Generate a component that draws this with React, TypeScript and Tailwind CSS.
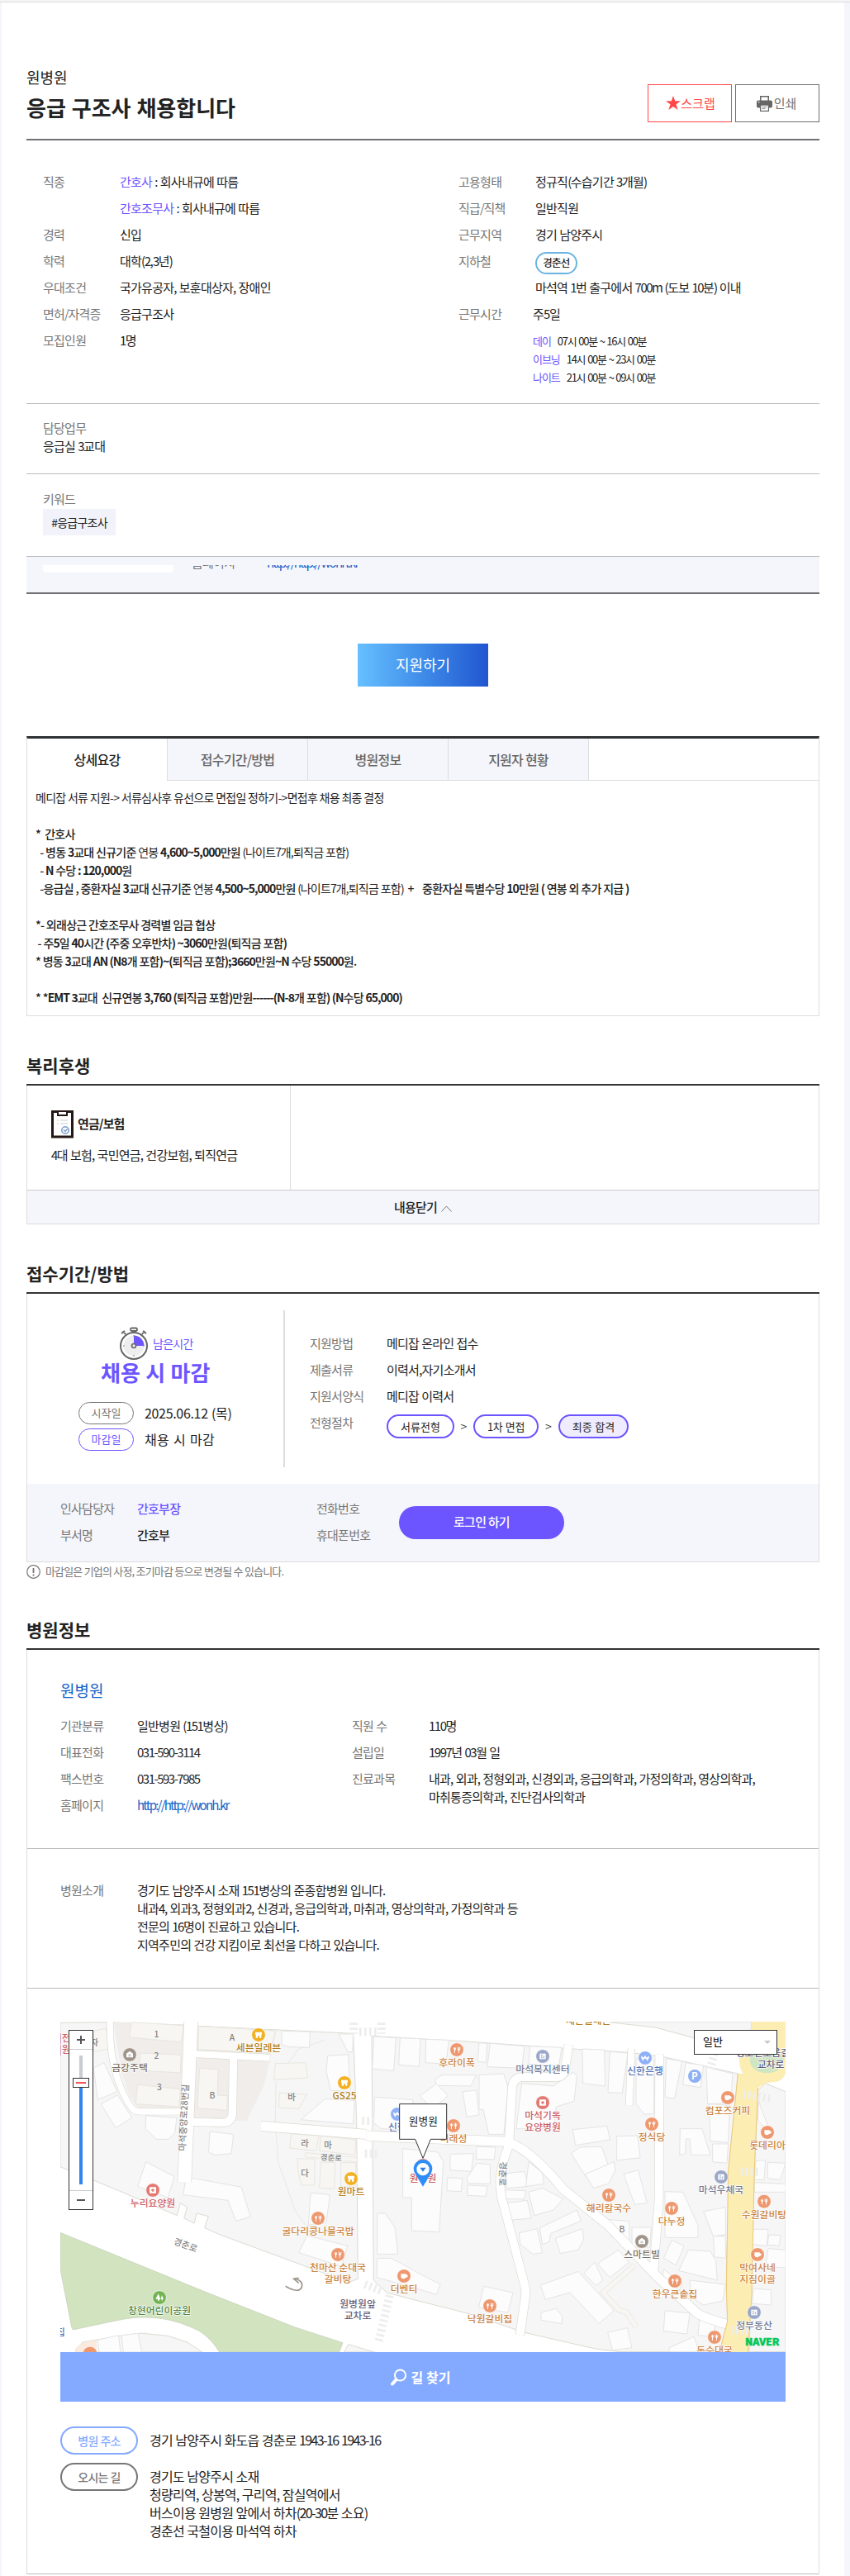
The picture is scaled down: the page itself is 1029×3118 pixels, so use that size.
import { useState, type ReactNode } from "react";

/* ================= TEXT ================= */
// Digits and latin runs sit tighter than the hangul around them
function T({ children }: { children: string }) {
  return (
    <>
      {children.split(/([0-9A-Za-z.:/~()+-]+)/).map((part, i) =>
        i % 2 === 1 ? (
          <span key={i} className="tracking-[-0.1em]">
            {part}
          </span>
        ) : (
          part
        )
      )}
    </>
  );
}

type RowProps = {
  label?: string;
  labelClass?: string;
  children: ReactNode;
};

function Row({ label = "", labelClass = "w-[93px]", children }: RowProps) {
  return (
    <div className="flex leading-8">
      <span className={`shrink-0 text-[#777] ${labelClass}`}>
        <T>{label}</T>
      </span>
      <div className="text-[#222]">{children}</div>
    </div>
  );
}

function SectionTitle({ children }: { children: string }) {
  return (
    <h2 className="border-b-2 border-[#333] pb-2 text-[21px] font-bold leading-[30px] tracking-normal text-[#222]">
      {children}
    </h2>
  );
}

/* ================= ICONS ================= */
function PrinterIcon() {
  return (
    <svg width="19" height="19" viewBox="0 0 19 19">
      <path d="M4 0h11v6H4z" fill="#666" />
      <path d="M5.5 1.5h8V6h-8z" fill="#fff" />
      <rect x="0" y="5.5" width="19" height="9" rx="2" fill="#666" />
      <path d="M4 10.500h11V19H4z" fill="#666" />
      <path d="M5.200 11.700h8.600v6.100H5.200z" fill="#fff" />
      <path d="M6.500 13.500h6M6.500 15.500h4" stroke="#888" />
      <circle cx="2.800" cy="7.800" r=".8" fill="#fff" />
    </svg>
  );
}

function InsuranceIcon() {
  return (
    <svg width="27" height="34" viewBox="0 0 27 34">
      <rect x="1.500" y="1.500" width="24" height="30.500" fill="#fff" stroke="#231815" strokeWidth="3" />
      <path d="M8 2v4h11V2" fill="#fff" stroke="#231815" strokeWidth="2" />
      <path d="M7 12h2M11 12h9M7 16h2M11 16h9" stroke="#ddd" strokeWidth="1.600" />
      <circle cx="17" cy="24" r="4.200" fill="#fff" stroke="#8aa8d0" strokeWidth="1.800" />
      <path d="M15 23.500l2 2 2.500-3" fill="none" stroke="#7f9fcc" strokeWidth="1.500" />
    </svg>
  );
}

function StopwatchIcon() {
  return (
    <svg width="36" height="40" viewBox="0 0 36 40">
      <rect x="14" y="1.500" width="8" height="3.500" rx="1.500" fill="none" stroke="#666" strokeWidth="1.800" />
      <path d="M18 5v3M5 5l3 4M31 5l-3 4M3 8l4-3M33 8l-4-3" stroke="#666" strokeWidth="2" />
      <circle cx="18" cy="23" r="16" fill="#fff" stroke="#666" strokeWidth="2" />
      <circle cx="18" cy="23" r="12.500" fill="#eee" />
      <path d="M18 23V10.500A12.500 12.500 0 0 1 30.500 23z" fill="#6c55ff" />
      <path d="M18 34v2M5 23h2M29 23h2M18 10v2" stroke="#888" />
      <circle cx="18" cy="23" r="2.500" fill="#eee" stroke="#666" strokeWidth="1.600" />
    </svg>
  );
}

/* ================= MAP ================= */
type Poi = {
  x: number;
  y: number;
  kind: "food" | "cup" | "store" | "cross" | "home" | "bank" | "office" | "park";
  name: string[];
};

const POI_COLORS: Record<Poi["kind"], [string, string]> = {
  food: ["#ee9870", "#cc8442"],
  cup: ["#ee9870", "#cc8442"],
  store: ["#f2b122", "#b27f1c"],
  cross: ["#e27a73", "#cc6067"],
  home: ["#9f958a", "#7d7368"],
  bank: ["#8fb0f5", "#5272b5"],
  office: ["#9ba7c8", "#727a94"],
  park: ["#71b552", "#4e853f"],
};

const POIS: Poi[] = [
  { x: 291, y: 171, kind: "home", name: ["금강주택"] },
  { x: 759, y: 99, kind: "store", name: ["세븐일레븐"] },
  { x: 1071, y: 273, kind: "store", name: ["GS25"] },
  { x: 1095, y: 621, kind: "store", name: ["원마트"] },
  { x: 375, y: 663, kind: "cross", name: ["누리요양원"] },
  { x: 975, y: 765, kind: "food", name: ["굴다리콩나물국밥"] },
  { x: 1047, y: 897, kind: "food", name: ["천마산 순대국", "갈비탕"] },
  { x: 1287, y: 975, kind: "cup", name: ["더벤티"] },
  { x: 399, y: 1053, kind: "park", name: ["창현어린이공원"] },
  { x: 1263, y: 387, kind: "bank", name: ["신협"] },
  { x: 1356, y: 573, kind: "cross", name: ["원병원"] },
  { x: 1479, y: 153, kind: "food", name: ["후라이폭"] },
  { x: 1791, y: 177, kind: "office", name: ["마석복지센터"] },
  { x: 2163, y: 183, kind: "bank", name: ["신한은행"] },
  { x: 1791, y: 345, kind: "cross", name: ["마석기독", "요양병원"] },
  { x: 1467, y: 429, kind: "food", name: ["미래성"] },
  { x: 2187, y: 423, kind: "food", name: ["정식당"] },
  { x: 2463, y: 327, kind: "cup", name: ["컴포즈커피"] },
  { x: 2607, y: 453, kind: "cup", name: ["롯데리아"] },
  { x: 2439, y: 615, kind: "office", name: ["마석우체국"] },
  { x: 2595, y: 704, kind: "food", name: ["수원갈비탕"] },
  { x: 2031, y: 681, kind: "food", name: ["해리칼국수"] },
  { x: 2259, y: 729, kind: "food", name: ["다누정"] },
  { x: 2151, y: 849, kind: "home", name: ["스마트빌"] },
  { x: 2271, y: 993, kind: "food", name: ["한우큰솥집"] },
  { x: 2571, y: 897, kind: "cup", name: ["박여사네", "지짐이골"] },
  { x: 2559, y: 1107, kind: "office", name: ["정부동산"] },
  { x: 1599, y: 1083, kind: "food", name: ["낙원갈비집"] },
  { x: 2415, y: 1197, kind: "food", name: ["돈수대국"] },
];

const LAND = [
  "39,55 208,53 487,63 540,67 1103,94 1115,410 1120,985 1085,998 945,945 620,825 563,800 577,758 535,747 525,783 488,765 500,725 475,710 463,755 240,660 39,578",
  "1170,103 1320,112 1500,122 1870,148 2105,163 2235,180 2500,240 2470,580 2458,960 2462,1140 2433,1250 2070,1250 1978,1238 1725,1180 1517,1110 1320,1060 1225,1035 1177,990",
  "2010,51 2200,72 2340,110 2540,150 2550,51",
  "2573,300 2600,275 2673,305 2673,1250 2540,1250 2557,660",
  "95,1240 120,1215 250,1193 330,1182 430,1192 500,1215 555,1251 95,1251",
  "1085,1223 1180,1251 1070,1251",
];

const BUILDINGS = [
  "160,220 198,200 245,305 175,335", "187,350 247,317 299,400 240,437", "350,392 462,400 455,455 432,478 388,478 348,440",
  "582,450 668,460 660,530 600,535 578,525", "843,85 946,88 944,145 870,143 843,135", "1010,175 1085,170 1092,305 1020,300 1005,230",
  "1050,96 1103,96 1100,160 1085,163", "913,407 1000,332 1108,337 1103,422 1075,420", "350,560 453,613 430,690 320,650",
  "497,615 697,652 730,760 677,775 648,700 485,680", "948,672 1018,680 1005,780 940,790", "935,828 1083,865 1060,940 905,890",
  "1178,105 1258,110 1250,230 1172,222", "1273,110 1347,113 1342,214 1268,208", "1367,115 1450,118 1440,205 1365,200",
  "1180,325 1320,335 1310,445 1205,440 1178,420", "1283,512 1410,525 1430,560 1415,815 1315,810 1315,690 1283,690",
  "1190,747 1220,747 1255,800 1265,895 1190,895", "1190,910 1240,910 1280,930 1350,970 1420,1005 1405,1042 1300,1010 1188,980",
  "1560,128 1590,130 1585,200 1555,195", "1600,130 1725,140 1715,220 1590,215", "1745,140 1860,145 1850,210 1740,205",
  "1425,245 1550,245 1530,285 1405,283 1400,262", "1345,320 1405,277 1447,320 1390,370", "1500,305 1550,300 1560,390 1515,397",
  "1560,245 1650,240 1665,290 1650,460 1595,460 1575,370 1560,370", "1715,275 1830,285 1900,235 1915,245 1905,340 1840,360 1830,440 1695,440",
  "1935,150 2015,153 2018,285 1937,275", "2035,160 2100,165 2080,310 2028,308", "2130,185 2195,190 2195,385 2160,388 2130,350",
  "2240,185 2297,195 2270,330 2235,325", "2310,200 2375,210 2365,290 2300,280", "2385,215 2480,240 2475,345 2390,350",
  "1900,443 2025,430 2035,480 1910,500", "2060,467 2135,465 2145,545 2060,555", "1895,530 1925,507 2005,505 2030,575 1948,615",
  "2290,440 2370,440 2400,535 2330,535 2325,477 2310,477 2310,530 2288,535", "2395,350 2470,355 2465,490 2400,485", "2408,495 2465,495 2460,565 2408,560",
  "1455,532 1540,530 1532,595 1455,590", "1445,617 1500,620 1495,668 1443,665", "1550,505 1620,507 1615,552 1550,550",
  "1552,565 1600,570 1600,640 1520,638 1515,620", "1518,645 1590,648 1585,685 1518,682", "1658,602 1725,595 1738,650 1660,655",
  "1740,560 1790,600 1795,640 1730,650", "1655,662 1730,665 1725,695 1655,695", "1660,710 1735,700 1750,765 1670,772",
  "1740,670 1790,655 1865,695 1830,735 1760,755", "1945,605 2050,560 2055,590 2030,640 1975,655", "2085,605 2138,590 2170,710 2125,715",
  "1705,818 1770,803 1790,890 1755,895 1710,860", "1780,800 1915,735 1930,775 1820,820 1815,850 1790,860", "1837,838 1935,803 1940,840 1920,880 1855,893",
  "1783,1008 1920,958 2050,1100 1995,1147 1890,1035 1800,1060", "1990,930 2065,880 2105,925 2035,980", "1940,965 1980,925 2010,990 1985,1010",
  "1785,1107 1840,1093 1862,1120 1860,1148 1785,1135", "1577,1012 1683,1035 1665,1107 1558,1090", "2030,770 2105,775 2105,850 2040,830",
  "2115,798 2185,798 2180,870 2115,870", "2235,668 2300,670 2355,790 2355,835 2235,835", "2260,845 2305,865 2275,935 2230,910",
  "2320,880 2400,885 2420,920 2425,990 2285,955", "2230,950 2300,1000 2280,1040 2225,980", "2325,990 2455,1005 2445,1065 2375,1080 2330,1050",
  "2235,1100 2325,1110 2315,1185 2230,1175", "2360,1130 2420,1145 2410,1195 2355,1190", "2027,1180 2098,1163 2115,1235 2045,1245", "2250,1235 2340,1195 2360,1250 2250,1250",
  "2375,740 2455,725 2455,825 2410,830", "2410,830 2455,830 2455,910 2415,905", "2575,340 2620,460 2573,410", "2565,555 2600,555 2595,625 2560,625",
  "2608,562 2673,565 2655,625 2608,620", "2560,635 2673,640 2673,670 2560,670", "2555,805 2610,805 2605,865 2553,860", "2612,825 2655,827 2650,865 2608,862",
  "2610,875 2673,880 2673,945 2600,940", "2556,1020 2620,1025 2620,1080 2552,1075", "175,1207 250,1190 258,1251 180,1251", "262,1190 322,1183 335,1251 268,1251",
];

const BEIGE_BUILDINGS = [
  "297,53 487,65 478,125 290,108", "330,165 478,172 475,237 325,228", "320,280 475,296 470,360 313,350", "541,68 760,80 820,85 800,165 540,152",
  "545,220 612,225 610,318 647,320 643,373 537,365", "160,85 205,75 215,150 160,160", "820,203 930,200 938,255 815,262", "835,310 935,315 905,368 832,363",
  "878,458 978,465 968,520 872,510", "985,465 1112,480 1108,535 980,520", "900,548 963,550 962,645 915,645 903,600", "985,560 1037,563 1035,658 980,655", "1058,563 1112,563 1112,650 1058,650",
];

const ROADS: [string, number][] = [
  ["M220 40C215 200 255 300 295 360Q305 378 330 378H490", 22],
  ["M514 40L490 635", 48],
  ["M520 168L800 182", 24],
  ["M668 180L664 385Q660 418 630 418L505 415", 28],
  ["M768 430L1150 460", 34],
  ["M1150 465L1240 470L1670 487", 34],
  ["M1885 135L1872 225Q1865 252 1840 252H1720Q1685 252 1680 290L1668 500Q1640 570 1637 620T1650 720L1726 1010Q1730 1030 1728 1050L1708 1190", 30],
  ["M2113 150L2105 355", 24],
  ["M2215 170L2213 700L2193 970", 30],
  ["M1670 490Q1750 520 1866 660L2028 790L2210 980L2352 1110Q2380 1128 2463 1150", 32],
];

const PLACE_NOTES: [number, number, string][] = [
  [388, 107, "1"], [388, 186, "2"], [399, 299, "3"], [663, 120, "A"], [591, 329, "B"], [879, 336, "바"],
  [927, 504, "라"], [1011, 509, "마"], [927, 612, "다"], [2079, 816, "B"], [163, 138, "자"],
];

function PoiGlyph({ kind }: { kind: Poi["kind"] }) {
  switch (kind) {
    case "food":
      return <path d="M-7-9a5 6 0 0 1 1 11v9h-3v-9a5 6 0 0 1 2-11M2-10v7q0 5 4 5v9h3V2q4 0 4-5v-7h-2v7H9v-7H6v7H4v-7z" fill="#fff" />;
    case "cup":
      return <path d="M-11-8H8v3q8 0 6 6t-8 5q-3 4-8 4-9 0-9-9z" fill="#fff" />;
    case "store":
      return <path d="M-12-10h24v9h-2V11H3V4h-6v7h-7V-1h-2z" fill="#fff" />;
    case "cross":
      return (
        <>
          <rect x="-12" y="-11" width="24" height="22" rx="3" fill="#fff" />
          <path d="M-2-6h4v4h4v4H2v4h-4V2h-4v-4h4z" fill="#e27a73" />
        </>
      );
    case "home":
      return (
        <>
          <path d="M-12-4L0-13 12-4V10h-24z" fill="#fff" />
          <path d="M-5 0H5M-5 5H5" stroke="#9f958a" strokeWidth="2" />
        </>
      );
    case "bank":
      return <path d="M-13-7l5 14L0-6l8 13 5-14M-14 0h28" fill="none" stroke="#fff" strokeWidth="4" />;
    case "office":
      return (
        <>
          <rect x="-11" y="-10" width="22" height="20" fill="#fff" />
          <path d="M-6-5h5M-6 0h5M-6 5h5M4-2v9" stroke="#9ba7c8" strokeWidth="3" />
        </>
      );
    case "park":
      return <path d="M-4-14L4 5H0v6h-6V5h-8zM9-9l6 15h-4v5H8V6H5z" fill="#fff" />;
  }
}

function MapCanvas() {
  return (
    <svg
      viewBox="39 51 2634 1200"
      className="block h-[400px] w-[878px] font-['Noto_Sans_CJK_KR',sans-serif] font-medium tracking-normal [word-spacing:0]"
    >
      <rect x="39" y="51" width="2634" height="1200" fill="#fff" />
      {LAND.map((p) => (
        <polygon key={p} points={p} fill="#f6f6f6" stroke="#dcdad2" strokeWidth="3" />
      ))}
      <polygon points="233,53 487,63 475,372 325,368 290,320 262,240" fill="#f0edea" />
      <polygon points="541,68 825,82 780,280 715,412 520,405" fill="#f0edea" />
      <path
        d="M1050 95L1100 163M1000 118L905 150L868 200M822 270L820 415L830 560L893 740L930 790"
        fill="none"
        stroke="#e0dfda"
        strokeWidth="2"
      />
      {BUILDINGS.map((p) => (
        <polygon key={p} points={p} fill="#fcfcfc" stroke="#e4e4e4" strokeWidth="3" />
      ))}
      {BEIGE_BUILDINGS.map((p) => (
        <polygon key={p} points={p} fill="#f7f6f2" stroke="#e8e6df" strokeWidth="3" />
      ))}

      {/* road casings first so that crossings stay open */}
      {ROADS.map(([d, w]) => (
        <path key={d} d={d} fill="none" stroke="#dcdad2" strokeWidth={w + 4} />
      ))}
      {ROADS.map(([d, w]) => (
        <path key={d} d={d} fill="none" stroke="#fff" strokeWidth={w} />
      ))}
      <path d="M2125 935L2010 1035L2070 1100L2095 1105L2130 1160" fill="none" stroke="#e8e6df" strokeWidth="20" />
      <path d="M2125 935L2010 1035L2070 1100L2095 1105L2130 1160" fill="none" stroke="#f7f6f3" strokeWidth="15" />
      <path d="M935 535L1112 552" stroke="#e8e6df" strokeWidth="18" strokeLinecap="round" />
      <path d="M935 535L1112 552" stroke="#f7f6f2" strokeWidth="13" strokeLinecap="round" />

      <path
        d="M2550 51L2548 80Q2480 170 2518 240L2500 240L2465 590L2458 1020L2462 1140L2433 1251H2537L2550 1040L2560 580L2573 292Q2600 270 2630 270T2673 240V51z"
        fill="#fcedb2"
      />
      <path d="M2500 240L2465 590L2458 1020L2462 1140L2433 1251M2573 292L2560 580L2550 1040L2537 1251" fill="none" stroke="#ecc977" strokeWidth="3" />
      <ellipse cx="2605" cy="190" rx="62" ry="48" fill="#cfe6c3" />

      <path
        d="M39 817L560 1030L890 1160L1065 1217L1052 1251H617Q585 1200 545 1175Q400 1100 240 1137L85 1170L80 1160L39 950z"
        fill="#d2e3c0"
        stroke="#c4cdb6"
        strokeWidth="2"
      />
      <path d="M95 1240Q100 1215 170 1208V1251H95z" fill="#fbeade" />

      {/* crosswalks */}
      <g stroke="#ededed" strokeWidth="30" strokeDasharray="8 10" fill="none">
        <path d="M1125 88H1190M1135 411H1180M1145 530H1190" />
        <path d="M1145 1005L1210 1030" />
        <path d="M1235 1045L1195 1215" />
        <path d="M2520 315L2620 330M2510 596H2575M2475 1172H2540" />
        <path d="M1105 55V95M1205 55V95M2415 165L2400 220" />
      </g>
      <path d="M857 1012Q905 1040 916 1015Q922 990 887 984M905 982L887 985L905 1000" fill="none" stroke="#9c958c" strokeWidth="5" />

      {PLACE_NOTES.map(([x, y, text]) => (
        <text key={`${x}-${text}`} x={x} y={y} textAnchor="middle" fontSize="31" fill="#838383">
          {text}
        </text>
      ))}
      <g fontSize="32" fill="#858585" textAnchor="middle">
        <text transform="translate(499 400) rotate(-87)">마석중앙로28번길</text>
        <text transform="translate(1022 555) rotate(3)" fontSize="28">경춘로</text>
        <text transform="translate(490 873) rotate(20)">경춘로</text>
        <text transform="translate(1634 603) rotate(92)">경춘로</text>
      </g>

      <g fontSize="35.500" textAnchor="middle" stroke="#fff" strokeWidth="4" paintOrder="stroke" strokeLinejoin="round">
        <text x="56" y="123" fill="#cc6067">|전</text>
        <text x="56" y="164" fill="#cc6067">|원</text>
        <text x="40" y="1192" fill="#5272b5">집</text>
        <text x="1957" y="60" fill="#b27f1c">세븐일레븐</text>
        <text x="2590" y="178" fill="#645f7b">경호전로움길</text>
        <text x="2619" y="220" fill="#645f7b">교차로</text>
        <text x="1119" y="1088" fill="#645f7b">원병원앞</text>
        <text x="1119" y="1132" fill="#645f7b">교차로</text>
        {POIS.map((p) =>
          p.name.map((line, i) => (
            <text key={`${p.x}-${line}`} x={p.x} y={p.y + 60 + i * 43} fill={POI_COLORS[p.kind][1]}>
              {line}
            </text>
          ))
        )}
      </g>
      {POIS.map((p) => (
        <g key={`${p.x}-${p.y}`} transform={`translate(${p.x} ${p.y})`}>
          <circle r="25" fill={POI_COLORS[p.kind][0]} stroke="#fff" strokeWidth="2" />
          <PoiGlyph kind={p.kind} />
        </g>
      ))}
      <circle cx="147" cy="1257" r="25" fill="#ee9870" />
      <circle cx="2343" cy="249" r="24" fill="#8fb0f5" />
      <text x="2343" y="262" textAnchor="middle" fontSize="35" fontWeight="700" fill="#fff">P</text>

      {/* hospital bubble and pin */}
      <path d="M1271 350H1442V478H1384L1356 547L1328 478H1271z" fill="#fff" stroke="#333" strokeWidth="3" />
      <text x="1357" y="427" textAnchor="middle" fontSize="38" fontWeight="400" fill="#222">원병원</text>
      <path d="M1356 650L1331 608Q1322 596 1322 586A34 34 0 0 1 1390 586Q1390 596 1381 608z" fill="#2e8ef7" />
      <circle cx="1356" cy="587" r="23" fill="#fff" />
      <path d="M1345 581H1367L1356 596z" fill="#2e7de0" />

      <text x="2588" y="1226" textAnchor="middle" fontSize="33" fontWeight="900" textLength="124" lengthAdjust="spacingAndGlyphs" fill="#03c75a" stroke="#03c75a" strokeWidth="1.500">
        NAVER
      </text>
    </svg>
  );
}

function HospitalMap() {
  return (
    <div className="relative h-[400px] w-[878px] overflow-hidden">
      <MapCanvas />
      <div className="absolute left-[10px] top-[10px] flex h-[218px] w-[30px] flex-col items-center border border-[#333] bg-white">
        <div className="relative h-[23px] w-full border-b border-[#c8cbd0]">
          <span className="absolute left-[9px] top-[10px] h-[2px] w-[10px] bg-[#555]" />
          <span className="absolute left-[13px] top-[6px] h-[10px] w-[2px] bg-[#555]" />
        </div>
        <div className="mt-[7px] h-[27px] w-1 bg-[#c8cbd0]" />
        <div className="relative z-10 flex h-3 w-5 items-center justify-center border border-[#333] bg-white">
          <span className="h-[2px] w-3 bg-[#fa5252]" />
        </div>
        <div className="h-[117px] w-1 bg-[#2f86ef]" />
        <div className="relative mt-[7px] w-full grow border-t border-[#c8cbd0]">
          <span className="absolute left-[9px] top-[10px] h-[2px] w-[10px] bg-[#555]" />
        </div>
      </div>
      <button className="absolute right-[10px] top-[10px] flex h-[30px] w-[101px] items-center justify-between border border-[#333] bg-white pb-[2px] pl-[10px] pr-[7px] text-[13px] tracking-normal text-black">
        일반
        <span className="mt-[2px] border-x-4 border-t-4 border-x-transparent border-t-[#c5c8cd]" />
      </button>
    </div>
  );
}

/* ================= DATA ================= */
const TABS = ["상세요강", "접수기간/방법", "병원정보", "지원자 현황"];

const SHIFTS = [
  ["데이", "07시 00분 ~ 16시 00분"],
  ["이브닝", "14시 00분 ~ 23시 00분"],
  ["나이트", "21시 00분 ~ 09시 00분"],
];

const INTRO = [
  "경기도 남양주시 소재 151병상의 준종합병원 입니다.",
  "내과4, 외과3, 정형외과2, 신경과, 응급의학과, 마취과, 영상의학과, 가정의학과 등",
  "전문의 16명이 진료하고 있습니다.",
  "지역주민의 건강 지킴이로 최선을 다하고 있습니다.",
];

const DIRECTIONS = [
  "경기도 남양주시 소재",
  "청량리역, 상봉역, 구리역, 잠실역에서",
  "버스이용 원병원 앞에서 하차(20-30분 소요)",
  "경춘선 국철이용 마석역 하차",
];

/* ================= PAGE ================= */
export default function App() {
  const [tab, setTab] = useState(0);

  return (
    <div className="h-[3118px] w-[1029px] overflow-hidden bg-[#f5f6fc] font-['Noto_Sans_CJK_KR','Noto_Sans',sans-serif] text-[15px] leading-[22px] tracking-[-0.05em] text-[#222] [word-spacing:0.5px]">
      <div className="h-[3px] border-b border-[#ddd] bg-[#f5f5f5]" />
      <main className="ml-[2px] h-[3115px] w-[1020px] bg-white px-[30px]">
        {/* ===== HEADER ===== */}
        <header className="flex h-[167px] justify-between border-b-2 border-[#706f73] tracking-normal">
          <div className="pt-[78px]">
            <p className="text-[18px] leading-6">원병원</p>
            <h1 className="mt-[7px] text-[26px] font-bold leading-9 [word-spacing:1px]">응급 구조사 채용합니다</h1>
          </div>
          <div className="flex gap-1 pt-[99px]">
            <button className="flex h-[46px] w-[102px] items-center justify-center border border-[#ff4646] pb-px pl-[2px] text-[#ff4646]">
              <svg width="18" height="17" viewBox="0 0 18 17">
                <path d="M9 0l2.200 6.300H18l-5.500 4 2.100 6.700L9 13l-5.600 4 2.100-6.700L0 6.300h6.800z" fill="#ff4646" />
              </svg>
              스크랩
            </button>
            <button className="flex h-[46px] w-[102px] items-center justify-center gap-[2px] border border-[#6f6f6f] pr-[2px] text-[#6f6f6f]">
              <PrinterIcon />
              인쇄
            </button>
          </div>
        </header>

        {/* ===== SUMMARY ===== */}
        <section className="flex h-[319px] border-b border-[#bbb] pl-5 pt-[34px]">
          <div className="w-[503px]">
            <Row label="직종">
              <span className="text-[#6c55ff]">간호사</span> : 회사내규에 따름
            </Row>
            <Row>
              <span className="text-[#6c55ff]">간호조무사</span> : 회사내규에 따름
            </Row>
            <Row label="경력">신입</Row>
            <Row label="학력"><T>대학(2,3년)</T></Row>
            <Row label="우대조건"><T>국가유공자, 보훈대상자, 장애인</T></Row>
            <Row label="면허/자격증">응급구조사</Row>
            <Row label="모집인원"><T>1명</T></Row>
          </div>
          <div>
            <Row label="고용형태"><T>정규직(수습기간 3개월)</T></Row>
            <Row label="직급/직책">일반직원</Row>
            <Row label="근무지역">경기 남양주시</Row>
            <Row label="지하철">
              <div className="flex h-8 items-center pt-[5px]">
                <span className="flex h-[27px] w-[51px] items-center justify-center rounded-full border-2 border-[#6ab4e4] pb-px text-[12.5px] font-medium">
                  경춘선
                </span>
              </div>
              <T>마석역 1번 출구에서 700m (도보 10분) 이내</T>
            </Row>
            <Row label="근무시간" labelClass="w-[90px]">
              <T>주5일</T>
              <ul className="mt-[6px] text-[13px] leading-[22px] tracking-[-0.08em] [word-spacing:0.8px]">
                {SHIFTS.map(([name, time]) => (
                  <li key={name}>
                    <span className="mr-2 text-[#6c55ff]">{name}</span>
                    <T>{time}</T>
                  </li>
                ))}
              </ul>
            </Row>
          </div>
        </section>
        <section className="h-[85px] border-b border-[#bbb] pl-5 pt-[18px]">
          <p className="text-[#777]">담당업무</p>
          <p><T>응급실 3교대</T></p>
        </section>
        <section className="h-[100px] border-b border-[#bbb] pl-5 pt-[19px]">
          <p className="text-[#777]">키워드</p>
          <span className="mt-px inline-flex h-8 w-[88px] items-center justify-center bg-[#f2f3fa] pb-px text-[14px]">#응급구조사</span>
        </section>
        <section className="h-[45px] border-b-2 border-[#706f73] bg-[#f5f6fb] pl-5 pt-[10px]">
          <div className="flex h-[9px] items-end overflow-hidden">
            <div className="h-[9px] w-[158px] shrink-0 rounded-b bg-white" />
            <div className="ml-[22px] flex h-[22px] shrink-0 -translate-y-px">
              <span className="w-[91px] text-[#777]">홈페이지</span>
              <a className="tracking-[-0.12em] text-[#1464c8]">http://http://wonh.kr</a>
            </div>
          </div>
        </section>
        <button className="mx-auto mt-[60px] block h-[52px] w-[158px] bg-linear-to-r from-[#66c0ff] to-[#2255d0] pb-[2px] text-[18px] tracking-normal text-white">
          지원하기
        </button>

        {/* ===== DETAIL TABS ===== */}
        <section className="mt-[60px] h-[339px] border border-t-[3px] border-[#ddd] border-t-[#2f3133]">
          <div className="flex h-[51px] text-[16px]">
            {TABS.map((name, i) => (
              <button
                key={name}
                onClick={() => setTab(i)}
                className={`w-[170px] border-r border-[#ddd] pb-px font-medium ${
                  tab === i ? "text-[#222]" : "border-b bg-[#f5f6fb] text-[#666]"
                }`}
              >
                {name}
              </button>
            ))}
            <div className="grow border-b border-[#ddd]" />
          </div>
          <div className="whitespace-pre pl-[10px] pt-[9px] text-[14px] font-medium [word-spacing:0.2px] [&_b]:tracking-[-0.07em]">
            <p className="font-normal">메디잡 서류 지원-&gt; 서류심사후 유선으로 면접일 정하기-&gt;면접후 채용 최종 결정</p>
            <br />
            <p>*  간호사</p>
            <p>
              {"  - 병동 "}<b>3</b>교대 신규기준 <span className="font-normal">연봉</span> <b>4,600~5,000</b>만원{" "}
              <span className="font-normal"><T>(나이트7개,퇴직금 포함)</T></span>
            </p>
            <p>{"  - "}<b>N</b> 수당 <b>: 120,000</b>원</p>
            <p>
              {"  -응급실 , 중환자실 "}<b>3</b>교대 신규기준 <span className="font-normal">연봉</span> <b>4,500~5,000</b>만원{" "}
              <span className="font-normal"><T>(나이트7개,퇴직금 포함)</T></span>
              {"  +    중환자실 특별수당 "}<b>10</b>만원 <b>(</b> 연봉 외 추가 지급 <b>)</b>
            </p>
            <br />
            <p>*- 외래상근 간호조무사 경력별 임금 협상</p>
            <p>{" - 주"}<b>5</b>일 <b>40</b>시간 <b>(</b>주중 오후반차<b>) ~3060</b>만원<b>(</b>퇴직금 포함<b>)</b></p>
            <p>
              * 병동 <b>3</b>교대 <b>AN (N8</b>개 포함<b>)~(</b>퇴직금 포함<b>);3660</b>만원<b>~N</b> 수당 <b>55000</b>원.
            </p>
            <br />
            <p>
              * *<b>EMT 3</b>교대{"  "}신규연봉 <b>3,760 (</b>퇴직금 포함<b>)</b>만원<b>------(N-8</b>개 포함<b>) (N</b>수당 <b>65,000)</b>
            </p>
          </div>
        </section>

        {/* ===== BENEFITS ===== */}
        <div className="mt-11">
          <SectionTitle>복리후생</SectionTitle>
          <div className="border border-t-0 border-[#ddd]">
            <div className="h-[126px] w-[319px] border-r border-[#ddd] pl-[29px] pt-[30px]">
              <p className="flex items-center gap-[5px] font-medium leading-[32px]">
                <InsuranceIcon />
                <span className="pb-[2px] font-semibold tracking-[-0.06em]">연금/보험</span>
              </p>
              <p className="mt-[9px]"><T>4대 보험, 국민연금, 건강보험, 퇴직연금</T></p>
            </div>
            <button className="flex h-[41px] w-full items-center justify-center gap-[5px] border-t border-[#ccc] bg-[#f5f6fb] pb-px font-medium">
              내용닫기
              <svg width="13" height="8" viewBox="0 0 13 8" className="mt-1">
                <path d="M.5 7.500l6-6.500 6 6.500" fill="none" stroke="#777" />
              </svg>
            </button>
          </div>
        </div>

        {/* ===== APPLY PERIOD ===== */}
        <div className="mt-11">
          <SectionTitle>접수기간/방법</SectionTitle>
          <div className="h-[325px] border border-t-0 border-[#ddd]">
            <div className="flex h-[230px] pt-5">
              <div className="h-[190px] w-[312px] border-r-2 border-[#ddd] pt-5">
                <p className="flex h-10 items-center gap-[5px] pl-[111px] text-[14px] text-[#6c55ff]">
                  <StopwatchIcon />
                  남은시간
                </p>
                <p className="pl-[89px] text-[26px] font-bold leading-[30px] tracking-normal text-[#6c55ff]">채용 시 마감</p>
                <div className="mt-[21px] space-y-[5px] pl-[62px] text-[16px] tracking-[0.02em] [word-spacing:1px]">
                  <p className="flex items-center gap-[13px]">
                    <span className="flex h-[27px] w-[67px] items-center justify-center rounded-full border border-[#777] pb-px text-[13px] tracking-normal text-[#777]">
                      시작일
                    </span>
                    <span className="pb-[2px] tracking-[-0.02em]">2025.06.12 (목)</span>
                  </p>
                  <p className="flex items-center gap-[13px]">
                    <span className="flex h-[27px] w-[67px] items-center justify-center rounded-full border border-[#6c55ff] pb-px text-[13px] tracking-normal text-[#6c55ff]">
                      마감일
                    </span>
                    <span className="pb-[2px]">채용 시 마감</span>
                  </p>
                </div>
              </div>
              <div className="pl-[30px] pt-6">
                <Row label="지원방법">메디잡 온라인 접수</Row>
                <Row label="제출서류"><T>이력서,자기소개서</T></Row>
                <Row label="지원서양식">메디잡 이력서</Row>
                <Row label="전형절차">
                  <div className="flex items-center gap-[5px] pt-[6px] text-[13px] leading-[25px] tracking-normal">
                    <span className="w-[82px] rounded-full border-2 border-[#6c55ff] text-center">서류전형</span>
                    <span className="w-[13px] text-center text-[14px] text-[#444]">&gt;</span>
                    <span className="w-[79px] rounded-full border-2 border-[#6c55ff] text-center tracking-[-0.02em]">1차 면접</span>
                    <span className="w-[14px] text-center text-[14px] text-[#444]">&gt;</span>
                    <span className="w-[85px] rounded-full border-2 border-[#6c55ff] bg-[#efecff] text-center">최종 합격</span>
                  </div>
                </Row>
              </div>
            </div>
            <div className="flex h-[94px] bg-[#f5f6fb] pl-10 pt-[14px]">
              <div className="w-[310px] font-medium">
                <Row label="인사담당자" labelClass="w-[93px] font-normal"><span className="text-[#6c55ff]">간호부장</span></Row>
                <Row label="부서명" labelClass="w-[93px] font-normal">간호부</Row>
              </div>
              <div className="w-[100px]">
                <Row label="전화번호"> </Row>
                <Row label="휴대폰번호"> </Row>
              </div>
              <button className="mt-[13px] h-10 w-[200px] rounded-full bg-[#6c55ff] pb-[2px] font-medium text-white">로그인 하기</button>
            </div>
          </div>
          <p className="mt-[3px] flex items-center gap-[6px] text-[13px] leading-[17px] text-[#777]">
            <svg width="17" height="17" viewBox="0 0 17 17">
              <circle cx="8.500" cy="8.500" r="7.800" fill="none" stroke="#777" strokeWidth="1.200" />
              <path d="M8.500 4v6M8.500 11.500v2" stroke="#777" strokeWidth="1.800" />
            </svg>
            <span className="-mt-[2px] tracking-[-0.065em] [word-spacing:0.2px]">마감일은 기업의 사정, 조기마감 등으로 변경될 수 있습니다.</span>
          </p>
        </div>

        {/* ===== HOSPITAL ===== */}
        <div className="mt-[46px]">
          <SectionTitle>병원정보</SectionTitle>
          <div className="border-x border-[#ddd]">
            <section className="h-[241px] border-b border-[#bbb] px-10 pt-[33px]">
              <h3 className="text-[19px] leading-8 tracking-normal text-[#1464c8]">원병원</h3>
              <div className="mt-[11px] flex">
                <div className="w-[353px]">
                  <Row label="기관분류"><T>일반병원 (151병상)</T></Row>
                  <Row label="대표전화"><T>031-590-3114</T></Row>
                  <Row label="팩스번호"><T>031-593-7985</T></Row>
                  <Row label="홈페이지"><a className="tracking-[-0.12em] text-[#1464c8]">http://http://wonh.kr</a></Row>
                </div>
                <div>
                  <Row label="직원 수"><T>110명</T></Row>
                  <Row label="설립일"><T>1997년 03월 일</T></Row>
                  <Row label="진료과목">
                    <p className="pt-[5px] leading-[22px]">
                      <T>내과, 외과, 정형외과, 신경외과, 응급의학과, 가정의학과, 영상의학과,</T>
                      <br />
                      <T>마취통증의학과, 진단검사의학과</T>
                    </p>
                  </Row>
                </div>
              </div>
            </section>
            <section className="flex h-[169px] border-b border-[#bbb] px-10 pt-[39px]">
              <span className="w-[93px] text-[#777]">병원소개</span>
              <div>
                {INTRO.map((line) => (
                  <p key={line}><T>{line}</T></p>
                ))}
              </div>
            </section>
            <section className="h-[709px] border-b border-[#bbb] px-10 pt-10">
              <HospitalMap />
              <button className="flex h-[60px] w-full items-center justify-center gap-[5px] bg-[#84aaff] pr-[6px] text-[16px] font-semibold tracking-normal text-white">
                <svg width="20" height="21" viewBox="0 0 20 21">
                  <circle cx="11.500" cy="8" r="6.600" fill="none" stroke="#fff" strokeWidth="2" />
                  <path d="M6.500 13.500L2 18.500" stroke="#fff" strokeWidth="4" strokeLinecap="round" />
                </svg>
                길 찾기
              </button>
              <div className="mt-[30px] flex gap-[14px]">
                <span className="flex h-[34px] w-[94px] items-center justify-center rounded-full border-2 border-[#84aaff] pb-px text-[14px] font-medium text-[#84aaff]">
                  병원 주소
                </span>
                <p className="pt-[5px] text-[16px]"><T>경기 남양주시 화도읍 경춘로 1943-16 1943-16</T></p>
              </div>
              <div className="mt-[10px] flex gap-[14px]">
                <span className="flex h-[34px] w-[94px] items-center justify-center rounded-full border-2 border-[#777] pb-px text-[14px] font-medium text-[#777]">
                  오시는 길
                </span>
                <div className="pt-[5px] text-[16px]">
                  {DIRECTIONS.map((line) => (
                    <p key={line}><T>{line}</T></p>
                  ))}
                </div>
              </div>
            </section>
          </div>
        </div>
      </main>
    </div>
  );
}
